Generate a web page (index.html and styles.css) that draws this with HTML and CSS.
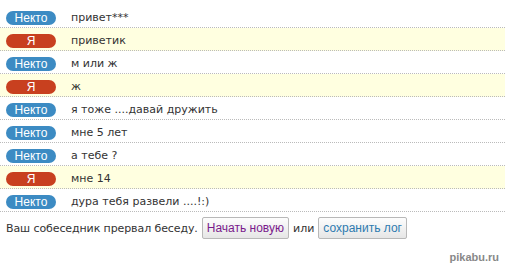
FILE: index.html
```html
<!DOCTYPE html>
<html lang="ru">

<head>
  <meta charset="UTF-8">
  <title>Чат</title>
  <link rel="stylesheet" href="styles.css">
</head>

<body>
  <div class="log">
    <div class="row"><span class="who stranger">Некто</span><span class="msg">привет***</span></div>
    <div class="row mine"><span class="who me">Я</span><span class="msg">приветик</span></div>
    <div class="row"><span class="who stranger">Некто</span><span class="msg">м или ж</span></div>
    <div class="row mine"><span class="who me">Я</span><span class="msg">ж</span></div>
    <div class="row"><span class="who stranger">Некто</span><span class="msg">я тоже ....давай дружить</span></div>
    <div class="row"><span class="who stranger">Некто</span><span class="msg">мне 5 лет</span></div>
    <div class="row"><span class="who stranger">Некто</span><span class="msg">а тебе ?</span></div>
    <div class="row mine"><span class="who me">Я</span><span class="msg">мне 14</span></div>
    <div class="row"><span class="who stranger">Некто</span><span class="msg">дура тебя развели ....!:)</span></div>
  </div>
  <div class="status">
    <span class="status-text">Ваш собеседник прервал беседу.</span>
    <a href="javascript:;" class="btn btn-new">Начать новую</a>
    <span>или</span>
    <a href="javascript:;" class="btn btn-save">сохранить лог</a>
  </div>
  <div class="mark">pikabu.ru</div>
</body>

</html>
```

FILE: styles.css
```css
* {
  padding: 0;
  margin: 0;
}

body {
  font-family: Tahoma, "DejaVu Sans", sans-serif;
  font-size: 11px;
  color: #333;
  background-color: #fff;
  padding-top: 5px;
  width: 505px;
  height: 267px;
  overflow: hidden;
}

.row {
  display: flex;
  align-items: flex-start;
  padding: 6px 0 2px;
  height: 14px;
  border-bottom: 1px dotted #bbb;
}

.row.mine {
  background-color: #ffffe0;
}

.who {
  width: 50px;
  height: 14px;
  line-height: 14px;
  margin-left: 6px;
  border-radius: 7px;
  color: #fff;
  text-align: center;
  font-size: 12px;
  font-family: "Liberation Sans", sans-serif;
}

.stranger {
  background-color: #3c8bc3;
}

.me {
  background-color: #c8401f;
}

.msg {
  margin-left: 15px;
  line-height: 14px;
}

.status {
  display: flex;
  align-items: center;
  gap: 4px;
  padding: 5px 0 0 6px;
}

.status-text {
  letter-spacing: -0.1px;
}

.btn {
  display: inline-block;
  height: 20px;
  line-height: 20px;
  padding: 0 4px;
  border: 1px solid #b8b8b8;
  border-radius: 2px;
  background: linear-gradient(#fdfdfd, #e6e6e6);
  text-decoration: none;
  font-family: "Liberation Sans", sans-serif;
  font-size: 12px;
}

.btn-new {
  color: #7a1a8c;
}

.btn-save {
  color: #2e7bb0;
}

.mark {
  text-align: right;
  padding: 12px 6px 0 0;
  font-family: "Liberation Sans", sans-serif;
  font-size: 11px;
  font-weight: bold;
  color: #888;
  text-shadow: 0 0 1px #fff;
}
```
